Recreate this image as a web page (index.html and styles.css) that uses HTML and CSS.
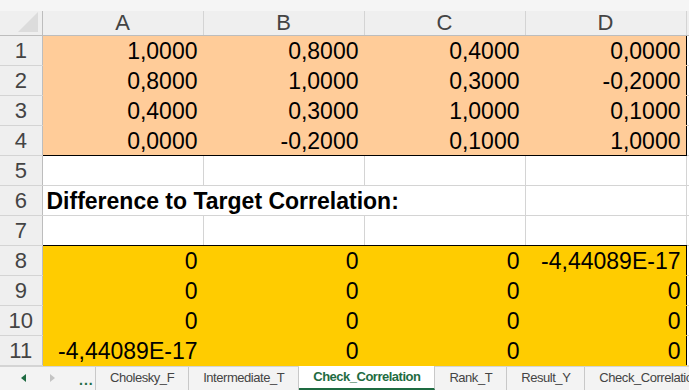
FILE: index.html
```html
<!DOCTYPE html>
<html lang="en">
<head>
    <meta charset="UTF-8">
    <title>Check_Correlation</title>
    <link rel="stylesheet" href="styles.css">
</head>
<body>
    <div class="sheet">
        <table class="grid">
            <colgroup>
                <col class="c-head">
                <col class="c-cell">
                <col class="c-cell">
                <col class="c-cell">
                <col class="c-cell">
                <col class="c-rest">
            </colgroup>
            <thead>
                <tr class="strip"><th colspan="6"></th></tr>
                <tr class="col-head">
                    <th class="corner"><span class="tri"></span></th>
                    <th>A</th>
                    <th>B</th>
                    <th>C</th>
                    <th>D</th>
                    <th class="rest"></th>
                </tr>
            </thead>
            <tbody>
                <tr class="orange">
                    <th>1</th>
                    <td>1,0000</td><td>0,8000</td><td>0,4000</td><td class="edge">0,0000</td>
                    <td class="rest"></td>
                </tr>
                <tr class="orange">
                    <th>2</th>
                    <td>0,8000</td><td>1,0000</td><td>0,3000</td><td class="edge">-0,2000</td>
                    <td class="rest"></td>
                </tr>
                <tr class="orange">
                    <th>3</th>
                    <td>0,4000</td><td>0,3000</td><td>1,0000</td><td class="edge">0,1000</td>
                    <td class="rest"></td>
                </tr>
                <tr class="orange last">
                    <th>4</th>
                    <td>0,0000</td><td>-0,2000</td><td>0,1000</td><td class="edge">1,0000</td>
                    <td class="rest"></td>
                </tr>
                <tr class="plain">
                    <th>5</th>
                    <td></td><td></td><td></td><td></td>
                    <td class="rest"></td>
                </tr>
                <tr class="plain">
                    <th>6</th>
                    <td colspan="3" class="title">Difference to Target Correlation:</td><td></td>
                    <td class="rest"></td>
                </tr>
                <tr class="plain above-yellow">
                    <th>7</th>
                    <td></td><td></td><td></td><td></td>
                    <td class="rest"></td>
                </tr>
                <tr class="yellow">
                    <th>8</th>
                    <td>0</td><td>0</td><td>0</td><td class="edge">-4,44089E-17</td>
                    <td class="rest"></td>
                </tr>
                <tr class="yellow">
                    <th>9</th>
                    <td>0</td><td>0</td><td>0</td><td class="edge">0</td>
                    <td class="rest"></td>
                </tr>
                <tr class="yellow">
                    <th>10</th>
                    <td>0</td><td>0</td><td>0</td><td class="edge">0</td>
                    <td class="rest"></td>
                </tr>
                <tr class="yellow">
                    <th>11</th>
                    <td>-4,44089E-17</td><td>0</td><td>0</td><td class="edge">0</td>
                    <td class="rest"></td>
                </tr>
            </tbody>
        </table>

        <div class="tabbar">
            <div class="nav">
                <svg width="10" height="10" viewBox="0 0 10 10"><polygon points="7,1 2,5 7,9" fill="#1e6b41"/></svg>
                <svg width="10" height="10" viewBox="0 0 10 10"><polygon points="3,1 8,5 3,9" fill="#c4c4c4"/></svg>
                <span class="more">...</span>
            </div>
            <div class="tab">Cholesky_F</div>
            <div class="tab">Intermediate_T</div>
            <div class="tab active">Check_Correlation</div>
            <div class="tab">Rank_T</div>
            <div class="tab">Result_Y</div>
            <div class="tab">Check_Correlation_Y</div>
        </div>
    </div>
</body>
</html>
```

FILE: styles.css
```css
*{
    margin: 0;
    padding: 0;
    box-sizing: border-box;
}
body{
    background-color: #ffffff;
    font-family: "Liberation Sans", Arial, sans-serif;
    overflow: hidden;
}
.sheet{
    width: 689px;
    height: 390px;
    overflow: hidden;
    display: flex;
    flex-direction: column;
}
.grid{
    border-collapse: collapse;
    table-layout: fixed;
    width: 689px;
}
.c-head{ width: 42px; }
.c-cell{ width: 161px; }
.c-rest{ width: 3px; }

.strip th{
    height: 11px;
    background-color: #f5f5f5;
    border: none;
}
.col-head th{
    height: 24px;
    background-color: #efefef;
    color: #444444;
    font-weight: normal;
    font-size: 22px;
    line-height: 22px;
    border-right: 1px solid #d4d4d4;
    border-bottom: 1px solid #bdbdbd;
    vertical-align: bottom;
    padding-bottom: 1px;
}
.col-head .corner{
    border-right: 1px solid #bdbdbd;
    position: relative;
}
.tri{
    position: absolute;
    right: 4px;
    bottom: 3px;
    width: 0;
    height: 0;
    border-left: 20px solid transparent;
    border-bottom: 20px solid #dcdcdc;
}
.col-head .rest{
    border-right: none;
}

tbody th{
    height: 30px;
    background-color: #efefef;
    color: #444444;
    font-weight: normal;
    font-size: 22px;
    text-align: center;
    border-right: 1px solid #bdbdbd;
    border-bottom: 1px solid #d4d4d4;
    vertical-align: bottom;
    line-height: 26px;
    padding-bottom: 1px;
}
tbody td{
    height: 30px;
    font-size: 23px;
    color: #000000;
    text-align: right;
    padding: 0 5px 1px 0;
    vertical-align: bottom;
    line-height: 26px;
    white-space: nowrap;
    overflow: visible;
    border-right: 1px solid #d4d4d4;
    border-bottom: 1px solid #d4d4d4;
}
tbody td.rest{
    border-right: none;
    background-color: #ffffff;
}

.orange td{
    background-color: #ffcc99;
    border-right-color: #ffcc99;
    border-bottom-color: #ffcc99;
}
.orange.last td{
    border-bottom: 1px solid #000000;
}
.yellow td{
    background-color: #ffcc00;
    border-right-color: #ffcc00;
    border-bottom-color: #ffcc00;
}
.above-yellow td{
    border-bottom: 1px solid #000000;
}
.orange td.edge,
.yellow td.edge{
    border-right: 1px solid #000000;
}
.orange td.rest,
.yellow td.rest,
.orange.last td.rest,
.above-yellow td.rest{
    background-color: #ffffff;
    border-bottom: 1px solid #d4d4d4;
}

.title{
    text-align: left !important;
    font-weight: bold;
    padding-left: 4px !important;
}

.tabbar{
    flex: 1;
    display: flex;
    align-items: stretch;
    background-color: #f3f3f3;
    border-top: 1px solid #d4d4d4;
    font-size: 13px;
    color: #444444;
}
.nav{
    width: 96px;
    flex-shrink: 0;
    display: flex;
    align-items: center;
    padding-left: 19px;
    gap: 18px;
    border-right: 1px solid #c8c8c8;
}
.more{
    color: #1e6b41;
    font-weight: bold;
    font-size: 14px;
    letter-spacing: 1px;
    margin-left: 4px;
    padding-top: 4px;
}
.tab{
    display: flex;
    align-items: center;
    flex-shrink: 0;
    padding: 0 14px 1px 14px;
    border-right: 1px solid #c8c8c8;
    white-space: nowrap;
    letter-spacing: -0.45px;
}
.tab.active{
    background-color: #ffffff;
    color: #1e6b41;
    font-weight: bold;
    margin-top: -1px;
    border-bottom: 2px solid #1e6b41;
    padding-bottom: 0;
    letter-spacing: -0.5px;
}
```
